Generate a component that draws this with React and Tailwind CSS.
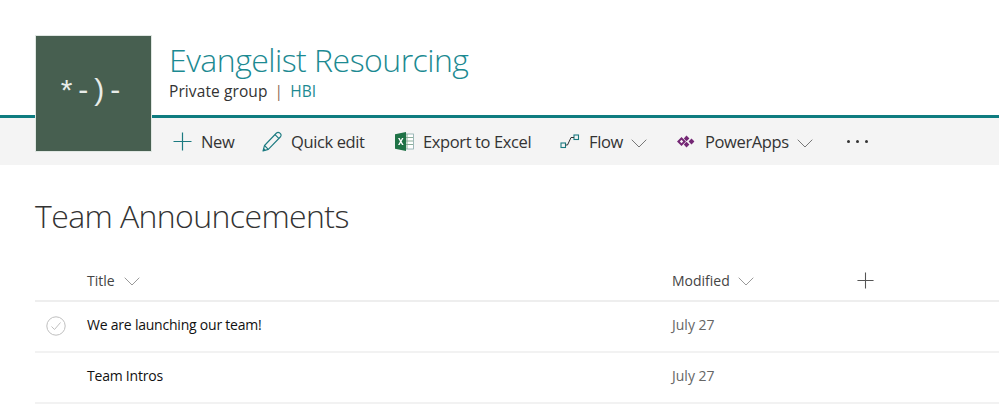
import React from "react";

const Chevron = ({ className = "", color = "#777" }) => (
  <svg width="16" height="9" viewBox="0 0 16 9" fill="none" className={className}>
    <path d="M0.7 0.7 L8 8 L15.3 0.7" stroke={color} strokeWidth="1" />
  </svg>
);

const Plus = ({ size = 19, color = "#1b7a80" }) => (
  <svg width={size} height={size} viewBox="0 0 19 19" fill="none">
    <path d="M9.5 0.5V18.5M0.5 9.5H18.5" stroke={color} strokeWidth="1.2" />
  </svg>
);

const Pencil = () => (
  <svg width="20" height="21" viewBox="0 0 20 21" fill="none">
    <path d="M1 20 L2.5 14.5 L14.5 2 Q16 0.7 17.8 2 L18.6 2.9 Q19.7 4.5 18.3 6 L6.3 18.4 Z" stroke="#1b7a80" strokeWidth="1.1" strokeLinejoin="round" />
    <path d="M2.5 14.5 L6.3 18.4 M13 3.6 L16.8 7.4" stroke="#1b7a80" strokeWidth="1.1" />
    <path d="M1 20 L1.8 17 L4 19.2 Z" fill="#1b7a80" />
  </svg>
);

const Excel = () => (
  <svg width="19" height="19" viewBox="0 0 19 19">
    <rect x="6" y="2" width="12.5" height="15" fill="#fff" stroke="#8aa" strokeWidth="0.8" />
    <path d="M12 2V17M8 5.5H18M8 9H18M8 12.5H18" stroke="#7fa68f" strokeWidth="0.9" />
    <path d="M0 2.2 L11 0 V19 L0 16.8 Z" fill="#1f7246" />
    <path d="M3 6 L5 9.4 L3 13 H4.6 L5.8 10.7 L7 13 H8.6 L6.6 9.4 L8.5 6 H7 L5.8 8.2 L4.6 6 Z" fill="#fff" />
  </svg>
);

const FlowIcon = () => (
  <svg width="20" height="15" viewBox="0 0 20 15" fill="none">
    <rect x="1" y="9" width="4.5" height="4.5" stroke="#1b7a80" strokeWidth="1.1" />
    <rect x="14" y="1" width="4.5" height="4.5" stroke="#1b7a80" strokeWidth="1.1" />
    <path d="M5.5 11 H7.5 L11 3.5 H14" stroke="#333" strokeWidth="1" />
  </svg>
);

const PowerApps = () => (
  <svg width="18" height="13" viewBox="0 0 18 13" fill="#742774">
    <path d="M4.5 2 L9 6.5 L4.5 11 L0 6.5 Z M4.5 4.8 L2.8 6.5 L4.5 8.2 L6.2 6.5 Z" fillRule="evenodd" />
    <path d="M9.5 0.5 L12.4 3.4 L9.5 6.2 L6.8 3.4 Z" />
    <path d="M9.5 6.8 L12.4 9.6 L9.5 12.5 L6.8 9.6 Z" />
    <path d="M14.5 3.6 L17.4 6.5 L14.5 9.4 L11.6 6.5 Z" />
  </svg>
);

const CheckCircle = () => (
  <svg width="20" height="20" viewBox="0 0 20 20" fill="none">
    <circle cx="10" cy="10" r="9.2" stroke="#bfbfbf" strokeWidth="1" />
    <path d="M5.5 10.5 L8.5 13.5 L14.5 6.5" stroke="#bfbfbf" strokeWidth="1" />
  </svg>
);

const Cmd = ({ icon, label, chevron, className = "" }) => (
  <div className={`flex items-center ${className}`}>
    {icon}
    <span className="pt-[1px] text-[16.5px] leading-none tracking-[-0.38px] text-[#333333]">{label}</span>
    {chevron && <Chevron className="ml-[8px] mt-[3px]" />}
  </div>
);

const Row = ({ title, check }) => (
  <div className="flex h-[51px] items-center border-b-2 border-[#f2f2f2]">
    <div className="flex w-[52px] justify-start pb-[2px] pl-[11px]">{check && <CheckCircle />}</div>
    <div className="w-[585px] pb-[4px] text-[14px] tracking-[-0.22px] text-[#111111]">{title}</div>
    <div className="pb-[4px] text-[14px] text-[#666666]">July 27</div>
  </div>
);

export default function App() {
  return (
    <div className="relative h-[415px] w-[999px] overflow-hidden bg-white font-['Open_Sans','Noto_Sans',sans-serif]">
      <header className="h-[118px] border-b-[3px] border-[#0e7c80] pl-[169px] pt-[39px]">
        <h1 className="text-[32px] font-light leading-[42px] tracking-[-0.52px] text-[#1c8a92]">Evangelist Resourcing</h1>
        <div className="flex items-center text-[15.5px] leading-[20px] tracking-[0.1px] text-[#333333]">
          <span>Private group</span>
          <span className="mx-[7px] text-[#8a6a55]">|</span>
          <span className="text-[#1c8a92]">HBI</span>
        </div>
      </header>

      <div className="absolute left-[35px] top-[35px] flex h-[117px] w-[117px] items-center justify-center border border-[#dfe6e2] bg-[#475f50] pb-[8px]">
        <span className="font-['Liberation_Sans',sans-serif] text-[30px] leading-none tracking-[6px] text-[#e8ece9]">*-)-</span>
      </div>

      <nav className="flex h-[47px] items-center bg-[#f4f4f4] pl-[173px]">
        <Cmd className="w-[89px]" icon={<span className="mr-[9px] flex"><Plus /></span>} label="New" />
        <Cmd className="w-[133px]" icon={<span className="mr-[9px] flex"><Pencil /></span>} label="Quick edit" />
        <Cmd className="w-[165px]" icon={<span className="mr-[9px] flex"><Excel /></span>} label="Export to Excel" />
        <Cmd className="w-[117px]" icon={<span className="mr-[9px] flex"><FlowIcon /></span>} label="Flow" chevron />
        <Cmd className="w-[170px]" icon={<span className="mr-[10px] flex"><PowerApps /></span>} label="PowerApps" chevron />
        <div className="flex gap-[6px]">
          <span className="h-[3px] w-[3px] rounded-full bg-[#333333]" />
          <span className="h-[3px] w-[3px] rounded-full bg-[#333333]" />
          <span className="h-[3px] w-[3px] rounded-full bg-[#333333]" />
        </div>
      </nav>

      <main className="pl-[35px]">
        <h2 className="mt-[31px] text-[32px] font-light leading-[40px] tracking-[-0.6px] text-[#333333]">Team Announcements</h2>
        <div className="mt-[22px]">
          <div className="flex h-[44px] items-center border-b-2 border-[#eeeeee] pt-[2px]">
            <div className="w-[52px]" />
            <div className="flex w-[585px] items-center text-[14px] text-[#444444]">
              Title<Chevron className="ml-[9px] mt-[2px]" color="#999" />
            </div>
            <div className="flex w-[185px] items-center text-[14px] text-[#444444]">
              Modified<Chevron className="ml-[8px] mt-[2px]" color="#999" />
            </div>
            <Plus size={17} color="#555555" />
          </div>
          <Row title="We are launching our team!" check />
          <Row title="Team Intros" />
        </div>
      </main>
    </div>
  );
}
